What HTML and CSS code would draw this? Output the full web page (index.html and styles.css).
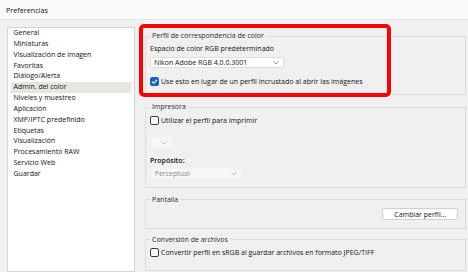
FILE: index.html
```html
<!DOCTYPE html>
<html lang="es">
<head>
<meta charset="utf-8">
<title>Preferencias</title>
<link rel="stylesheet" href="styles.css">
</head>
<body>
<div class="titlebar">Preferencias</div>
<div class="main">
  <ul class="list">
    <li>General</li>
    <li>Miniaturas</li>
    <li>Visualización de imagen</li>
    <li>Favoritas</li>
    <li>Diálogo/Alerta</li>
    <li class="selected">Admin. del color</li>
    <li>Niveles y muestreo</li>
    <li>Aplicación</li>
    <li>XMP/IPTC predefinido</li>
    <li>Etiquetas</li>
    <li>Visualización</li>
    <li>Procesamiento RAW</li>
    <li>Servicio Web</li>
    <li>Guardar</li>
  </ul>
  <div class="content">
    <fieldset class="group g1">
      <legend>Perfil de correspondencia de color</legend>
      <div class="label l1">Espacio de color RGB predeterminado</div>
      <div class="select s1"><span>Nikon Adobe RGB 4.0.0.3001</span><svg class="chev" width="6" height="4" viewBox="0 0 6 4"><polyline points="0.5,0.5 3,3 5.5,0.5" fill="none" stroke="#808080" stroke-width="0.8"/></svg></div>
      <div class="check c1"><span class="box on"><svg width="9" height="9" viewBox="0 0 9 9"><polyline points="2,4.6 3.8,6.3 7,2.8" fill="none" stroke="#fff" stroke-width="1.1"/></svg></span><span>Use esto en lugar de un perfil incrustado al abrir las imágenes</span></div>
    </fieldset>
    <fieldset class="group g2">
      <legend>Impresora</legend>
      <div class="check c2"><span class="box"></span><span>Utilizar el perfil para imprimir</span></div>
      <div class="select disabled s2"><span></span><svg class="chev" width="6" height="4" viewBox="0 0 6 4"><polyline points="0.5,0.5 3,3 5.5,0.5" fill="none" stroke="#b0b0b0" stroke-width="0.8"/></svg></div>
      <div class="label strong l2">Propósito:</div>
      <div class="select disabled s3"><span>Perceptual</span><svg class="chev" width="6" height="4" viewBox="0 0 6 4"><polyline points="0.5,0.5 3,3 5.5,0.5" fill="none" stroke="#b0b0b0" stroke-width="0.8"/></svg></div>
    </fieldset>
    <fieldset class="group g3">
      <legend>Pantalla</legend>
      <div class="btnrow"><button class="btn">Cambiar perfil...</button></div>
    </fieldset>
    <fieldset class="group g4">
      <legend>Conversión de archivos</legend>
      <div class="check c4"><span class="box"></span><span>Convertir perfil en sRGB al guardar archivos en formato JPEG/TIFF</span></div>
    </fieldset>
  </div>
</div>
<div class="highlight"></div>
</body>
</html>
```
FILE: styles.css
```css
* { box-sizing: border-box; }
html, body { margin: 0; padding: 0; }
body {
  width: 468px;
  height: 272px;
  overflow: hidden;
  background: #f0f0f0;
  font-family: "Open Sans", "Noto Sans", sans-serif;
  font-size: 7px;
  color: #111;
  position: relative;
}
.titlebar {
  height: 20px;
  line-height: 20px;
  padding-left: 6px;
  background: #fafafa;
  border-bottom: 1px solid #e6e6e6;
  font-size: 7.2px;
}
.main {
  display: flex;
  align-items: flex-start;
  padding: 7px 2px 0 7px;
}
.list {
  list-style: none;
  margin: 0;
  padding: 0 2px;
  width: 128px;
  height: 245px;
  background: #fff;
  border: 1px solid #d4d4d4;
  flex: none;
}
.list li {
  height: 10.85px;
  line-height: 10.85px;
  padding-left: 2.5px;
  margin: 0 1px;
  white-space: nowrap;
}
.list li.selected { background: #e7e7df; }
.content {
  flex: 1;
  margin-left: 10px;
  display: flex;
  flex-direction: column;
}
.group {
  margin: 0;
  padding: 0 4px;
  border: 1px solid #dcdcdc;
  min-width: 0;
}
.group legend {
  padding: 0 2px;
  line-height: 10px;
  color: #2a2a2a;
}
.g1 { margin-top: 4px; padding-bottom: 7.5px; }
.g2 { margin-top: 7px; padding-bottom: 7.4px; }
.g3 { margin-top: 7.3px; padding-bottom: 7.7px; }
.g4 { margin-top: 6.3px; padding-bottom: 12px; }
.label { line-height: 10px; }
.l1 { margin-top: 3px; }
.l2 { margin-top: 7.4px; }
.strong { font-weight: 600; }
.select {
  display: flex;
  align-items: center;
  justify-content: space-between;
  height: 11px;
  padding: 0 4px 0 3px;
  background: #fff;
  border: 1px solid #dedede;
  border-radius: 1px;
}
.select.disabled {
  background: #f7f7f7;
  border-color: #f3f3f3;
  color: #8a8a8a;
}
.s1 { margin-top: 3px; width: 134px; }
.s2 { margin-top: 11.6px; width: 21px; margin-left: 0.7px; }
.s3 { margin-top: 2.6px; width: 91px; margin-left: 0.7px; }
.chev { flex: none; }
.check {
  display: flex;
  align-items: center;
  gap: 2px;
  line-height: 10px;
}
.c1 { margin-top: 8.5px; }
.c2 { margin-top: 3.7px; }
.c4 { margin-top: 3px; }
.box {
  width: 9px;
  height: 9px;
  border: 1px solid #3a3a3a;
  border-radius: 2px;
  background: #fbfbfb;
  flex: none;
  display: flex;
}
.box.on {
  background: #1a64c4;
  border-color: #1a64c4;
}
.box.on svg { margin: -1px; }
.btnrow {
  display: flex;
  justify-content: flex-end;
  margin-top: 3.3px;
  padding-right: 2.7px;
}
.btn {
  width: 76px;
  height: 11.7px;
  padding: 0;
  font: inherit;
  color: #111;
  background: #fff;
  border: 1px solid #d0d0d0;
  border-radius: 2px;
}
.highlight {
  position: absolute;
  left: 139px;
  top: 24px;
  width: 252px;
  height: 73px;
  border: 4px solid #ff0000;
  border-radius: 5px;
  box-shadow: 0 0 0 1px #fff;
  pointer-events: none;
}
```
